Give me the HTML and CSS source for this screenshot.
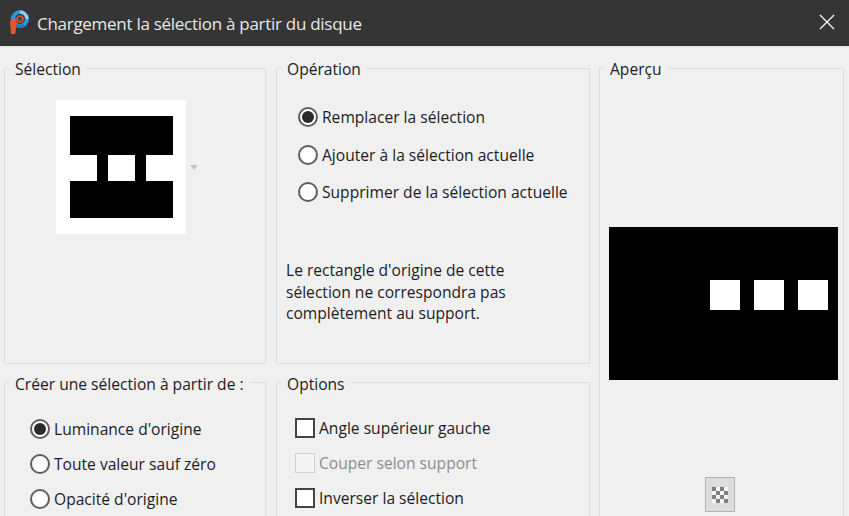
FILE: index.html
```html
<!DOCTYPE html>
<html lang="fr">
<head>
<meta charset="utf-8">
<title>Chargement la sélection à partir du disque</title>
<link rel="stylesheet" href="styles.css">
</head>
<body>
<div class="window">
  <header class="titlebar">
    <svg class="logo" viewBox="0 0 20 25" width="20" height="25">
      <circle cx="11" cy="9" r="7" fill="none" stroke="#2c9ad8" stroke-width="4"/>
      <path d="M11 2a7 7 0 0 1 7 7" fill="none" stroke="#8fd0ee" stroke-width="3"/>
      <path d="M6 14a7 7 0 0 0 9 1" fill="none" stroke="#1d78b8" stroke-width="3"/>
      <circle cx="11" cy="9" r="3" fill="#3a4a55" stroke="#d9532a" stroke-width="1.6"/>
      <path d="M1 11l6-3 1 5-2 11H2z" fill="#e3562a"/>
    </svg>
    <h1 class="title">Chargement la sélection à partir du disque</h1>
    <svg class="close" viewBox="0 0 16 16" width="16" height="16">
      <path d="M1 1l14 14M15 1L1 15" stroke="#f4f4f4" stroke-width="1.4" fill="none"/>
    </svg>
  </header>
  <main class="content">
    <div class="left">
      <div class="row top">
        <fieldset class="group g-sel">
          <legend>Sélection</legend>
          <div class="thumb-wrap">
            <svg class="thumb" viewBox="0 0 130 134" width="130" height="134">
              <rect width="130" height="134" fill="#fff"/>
              <rect x="14" y="16" width="103" height="39" fill="#000"/>
              <rect x="14" y="81" width="103" height="37" fill="#000"/>
              <rect x="41" y="55" width="11" height="26" fill="#000"/>
              <rect x="79" y="55" width="11" height="26" fill="#000"/>
            </svg>
            <span class="arrow"></span>
          </div>
        </fieldset>
        <fieldset class="group g-op">
          <legend>Opération</legend>
          <div class="choices">
            <label class="choice"><span class="radio on"></span>Remplacer la sélection</label>
            <label class="choice"><span class="radio"></span>Ajouter à la sélection actuelle</label>
            <label class="choice"><span class="radio"></span>Supprimer de la sélection actuelle</label>
          </div>
          <p class="note">Le rectangle d'origine de cette sélection ne correspondra pas complètement au support.</p>
        </fieldset>
      </div>
      <div class="row bottom">
        <fieldset class="group g-sel">
          <legend>Créer une sélection à partir de :</legend>
          <div class="choices tight">
            <label class="choice"><span class="radio on"></span>Luminance d'origine</label>
            <label class="choice"><span class="radio"></span>Toute valeur sauf zéro</label>
            <label class="choice"><span class="radio"></span>Opacité d'origine</label>
          </div>
        </fieldset>
        <fieldset class="group g-op">
          <legend>Options</legend>
          <div class="choices tight checks">
            <label class="choice"><span class="check"></span>Angle supérieur gauche</label>
            <label class="choice off"><span class="check"></span>Couper selon support</label>
            <label class="choice"><span class="check"></span>Inverser la sélection</label>
          </div>
        </fieldset>
      </div>
    </div>
    <fieldset class="group g-prev">
      <legend>Aperçu</legend>
      <svg class="preview" viewBox="0 0 229 153" width="229" height="153">
        <rect width="229" height="153" fill="#000"/>
        <rect x="101" y="53" width="30" height="30" fill="#fff"/>
        <rect x="145" y="53" width="30" height="30" fill="#fff"/>
        <rect x="189" y="53" width="30" height="30" fill="#fff"/>
      </svg>
      <button class="tool" type="button" aria-label="Transparence">
        <svg viewBox="0 0 20 20" width="16" height="16">
          <rect width="20" height="20" fill="#f4f4f4"/>
          <path d="M0 0h5v5H0zM10 0h5v5h-5zM5 5h5v5H5zM15 5h5v5h-5zM0 10h5v5H0zM10 10h5v5h-5zM5 15h5v5H5zM15 15h5v5h-5z" fill="#808080"/>
        </svg>
      </button>
    </fieldset>
  </main>
</div>
</body>
</html>
```
FILE: styles.css
```css
* { box-sizing: border-box; }
html, body { margin: 0; height: 100%; overflow: hidden; }
body { background: #f0f0f0; font-family: "Open Sans", "Noto Sans", sans-serif; font-size: 15.6px; color: #1c1c24; }
.window { width: 849px; height: 516px; overflow: hidden; }
.titlebar { height: 47px; background: #353535; border-bottom: 1px solid #e4e4e4; display: flex; align-items: center; padding: 0 14px 1px 9px; }
.logo { flex: none; }
.title { flex: 1; margin: 1px 0 0 8px; font-size: 17px; letter-spacing: -0.28px; font-weight: 400; color: #e8e8e8; }
.close { flex: none; margin-bottom: 2px; }
.content { display: flex; gap: 9px; padding: 11px 5px 0 4px; height: 600px; }
.left { width: 586px; display: flex; flex-direction: column; gap: 8px; }
.row { display: flex; gap: 10px; }
.top { height: 306px; flex: none; }
.bottom { height: 200px; flex: none; }
.group { margin: 0; border: 1px solid #dedede; padding: 0; min-width: 0; position: relative; }
.group legend { margin-left: 5px; padding: 2px 5px 0; line-height: 18px; }
.bottom .group legend { padding-top: 4px; line-height: 16px; }
.g-sel { width: 262px; }
.g-op { width: 314px; }
.g-prev { width: 245px; height: 600px; padding: 0; }
.thumb-wrap { display: flex; align-items: center; padding: 22px 0 0 51px; }
.thumb { display: block; }
.arrow { width: 0; height: 0; margin-left: 4px; border: 4px solid transparent; border-top: 5px solid #c4c4c4; border-bottom: 0; }
.choices { display: flex; flex-direction: column; gap: 17.5px; padding: 29px 0 0 21px; }
.choice { display: flex; align-items: center; gap: 4px; height: 20px; white-space: nowrap; }
.radio { width: 20px; height: 20px; border-radius: 50%; border: 2px solid #5e5e5e; background: #fff; flex: none; position: relative; }
.radio.on::after { content: ""; position: absolute; inset: 2px; border-radius: 50%; background: #2b2b2b; }
.check { width: 20px; height: 20px; border: 2px solid #444; background: #fff; flex: none; }
.off { color: #8d8d8d; }
.off .check { border: 1px solid #cfcfcf; background: #f5f5f5; }
.note { margin: 58px 0 0; padding: 0 9px; width: 262px; line-height: 21.5px; }
.tight { gap: 15px; padding: 27px 0 0 25px; }
.checks { padding: 26px 0 0 18px; }
.preview { display: block; margin: 149px 0 0 9px; }
.tool { display: flex; align-items: center; justify-content: center; width: 30px; height: 35px; margin: 97px 0 0 105px; padding: 0; background: #dedede; border: 1px solid #b4b4b4; }
```
